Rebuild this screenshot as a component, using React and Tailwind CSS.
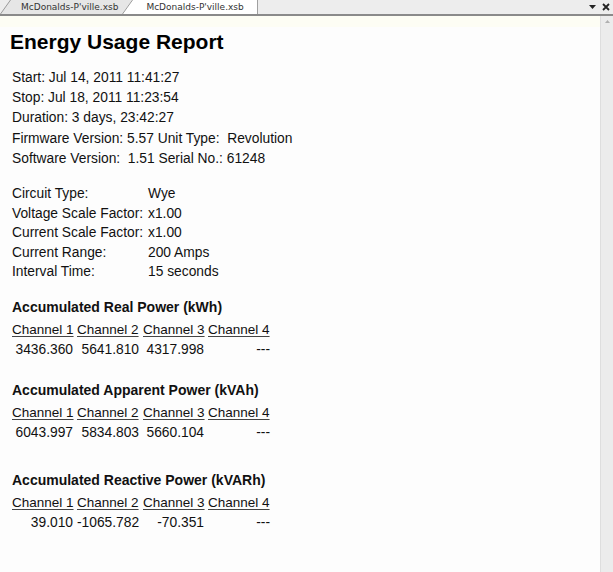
import React from "react";

const INFO = [
  "Start: Jul 14, 2011 11:41:27",
  "Stop: Jul 18, 2011 11:23:54",
  "Duration: 3 days, 23:42:27",
  "Firmware Version: 5.57 Unit Type:  Revolution",
  "Software Version:  1.51 Serial No.: 61248",
];

const SETTINGS = [
  ["Circuit Type:", "Wye"],
  ["Voltage Scale Factor:", "x1.00"],
  ["Current Scale Factor:", "x1.00"],
  ["Current Range:", "200 Amps"],
  ["Interval Time:", "15 seconds"],
];

const TABLES = [
  { title: "Accumulated Real Power (kWh)", values: ["3436.360", "5641.810", "4317.998", "---"], gap: "mb-[21px]" },
  { title: "Accumulated Apparent Power (kVAh)", values: ["6043.997", "5834.803", "5660.104", "---"], gap: "mb-[28px]" },
  { title: "Accumulated Reactive Power (kVARh)", values: ["39.010", "-1065.782", "-70.351", "---"], gap: "" },
];

const Slant = ({ fill }) => (
  <svg className="absolute left-[-10px] top-0" width="11" height="14" viewBox="0 0 11 14">
    <path d="M0 14 L10 0 L11 0 L11 14 Z" fill={fill} />
    <path d="M0.5 14 L10.5 0" stroke="#9a9a9a" strokeWidth="1" />
  </svg>
);

export default function App() {
  return (
    <div className="w-[613px] h-[572px] overflow-hidden bg-white flex flex-col" style={{ fontFamily: '"Liberation Sans", Arial, sans-serif' }}>
      {/* tab strip */}
      <div className="flex items-end h-[14px] bg-[#ededed] shrink-0" style={{ fontFamily: '"DejaVu Sans", Tahoma, sans-serif' }}>
        <div className="flex pl-[10px]">
          <div className="relative flex items-center h-[14px] pl-[11px] pr-[13px] bg-[#e6e6e6]">
            <Slant fill="#e6e6e6" />
            <span className="text-[9px] leading-none text-[#333]">McDonalds-P'ville.xsb</span>
          </div>
          <div className="relative flex items-center h-[14px] ml-[1px] pl-[14px] pr-[13px] bg-white border-r border-[#a0a0a0]">
            <Slant fill="#ffffff" />
            <span className="text-[9px] leading-none text-[#333]">McDonalds-P'ville.xsb</span>
          </div>
        </div>
        <div className="ml-auto flex items-center gap-[6px] pr-[3px] h-full">
          <svg width="7" height="4" viewBox="0 0 7 4"><path d="M0 0 H7 L3.5 4 Z" fill="#222" /></svg>
          <svg width="8" height="8" viewBox="0 0 8 8"><path d="M1 1 L7 7 M7 1 L1 7" stroke="#222" strokeWidth="1.8" /></svg>
        </div>
      </div>
      <div className="h-[2px] bg-[#8a8a8a] shrink-0" />

      <div className="flex flex-1 min-h-0">
        {/* document */}
        <div className="flex-1 bg-[#fdfdfd] text-[#111]">
          <div className="h-[11px] bg-[#fdfdf4]" />
          <div className="pl-[10px] pt-[3px]">
            <h1 className="text-[21px] font-bold leading-[24px] text-black">Energy Usage Report</h1>
            <div className="pl-[2px] mt-[14px] text-[13.8px] leading-[20px]">
              {INFO.map((l, i) => (
                <div key={i} className={`whitespace-pre ${i === 3 ? "mt-[1px]" : ""}`}>{l}</div>
              ))}
            </div>
            <div className="pl-[2px] mt-[15px] text-[13.8px] leading-[19.5px]">
              {SETTINGS.map(([k, v]) => (
                <div key={k} className="flex">
                  <span className="w-[136px] shrink-0">{k}</span>
                  <span>{v}</span>
                </div>
              ))}
            </div>
            <div className="pl-[2px] mt-[15px]">
              {TABLES.map((t) => (
                <div key={t.title} className={t.gap}>
                  <div className="font-bold text-[14px] leading-[20px]">{t.title}</div>
                  <div className="grid grid-cols-[65px_66px_65px_62px] text-[13.5px] leading-[21px] mt-[2px]">
                    {["Channel 1", "Channel 2", "Channel 3", "Channel 4"].map((c) => (
                      <span key={c} className="underline underline-offset-2 decoration-[#444]">{c}</span>
                    ))}
                  </div>
                  <div className="grid grid-cols-[65px_66px_65px_62px] text-[13.8px] leading-[19px]">
                    {t.values.map((v, i) => (
                      <span key={i} className={`text-right ${i === 3 ? "pr-0" : "pr-[4px]"}`}>{v}</span>
                    ))}
                  </div>
                </div>
              ))}
            </div>
          </div>
        </div>

        {/* scrollbar */}
        <div className="w-[13px] bg-[#ececec] border-l border-[#dedede] flex flex-col items-center pt-[4px]">
          <svg width="5" height="3" viewBox="0 0 5 3"><path d="M0 3 L2.5 0 L5 3 Z" fill="#b0b0b0" /></svg>
        </div>
      </div>
    </div>
  );
}
